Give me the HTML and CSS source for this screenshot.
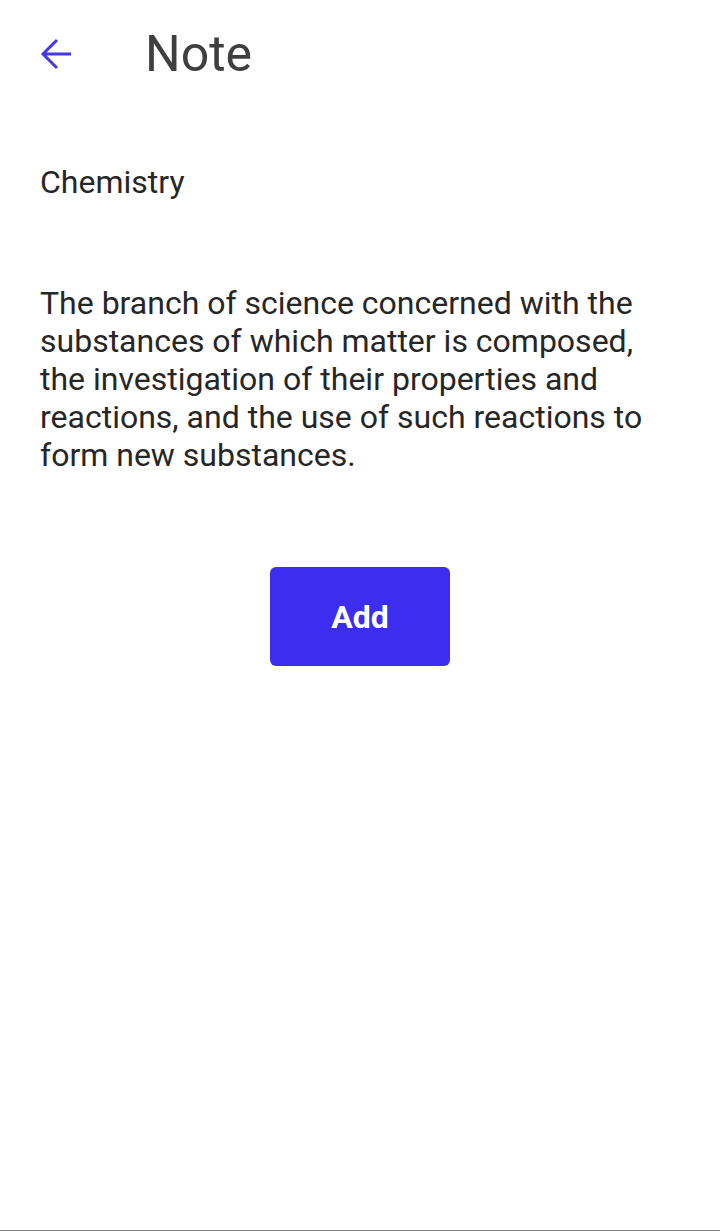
FILE: index.html
```html
<!DOCTYPE html>
<html>
<head>
<meta charset="utf-8">
<link rel="stylesheet" href="styles.css">
</head>
<body>
<div class="page">
  <header class="appbar">
    <button class="back" aria-label="Back">
      <svg viewBox="0 0 32 32" width="32" height="32"><path d="M31 16H3M17 2L3 16l14 14" fill="none" stroke="currentColor" stroke-width="3"/></svg>
    </button>
    <h1 class="title">Note</h1>
  </header>
  <main class="content">
    <p class="subject">Chemistry</p>
    <p class="body">The branch of science concerned with the substances of which matter is composed, the investigation of their properties and reactions, and the use of such reactions to form new substances.</p>
    <div class="actions">
      <button class="add">Add</button>
    </div>
  </main>
  <div class="bottom-line"></div>
</div>
</body>
</html>
```
FILE: styles.css
```css
* { box-sizing: border-box; }
html, body { margin: 0; padding: 0; background: #fff; }
body { font-family: Roboto, "Noto Sans", sans-serif; }
.page {
  width: 720px;
  height: 1231px;
  display: flex;
  flex-direction: column;
}
.appbar {
  display: flex;
  align-items: center;
  height: 108px;
  padding-left: 40px;
}
.back {
  border: 0;
  background: none;
  padding: 0;
  width: 32px;
  height: 32px;
  color: #4636e6;
  display: flex;
}
.title {
  margin: 0 0 0 73px;
  font-size: 50px;
  font-weight: 400;
  color: #3f3f3f;
}
.content {
  padding: 0 40px;
}
.subject {
  margin: 55px 0 0;
  font-size: 32px;
  line-height: 38px;
  color: #262626;
}
.body {
  margin: 83px 0 0;
  font-size: 32px;
  line-height: 38px;
  color: #262626;
}
.actions {
  display: flex;
  justify-content: center;
  margin-top: 93px;
}
.add {
  width: 180px;
  height: 99px;
  border: 0;
  border-radius: 6px;
  background: #3d2df0;
  color: #fff;
  font-family: Roboto, sans-serif;
  font-size: 32px;
  font-weight: 700;
}
.bottom-line {
  margin-top: auto;
  height: 1px;
  background: #808080;
}
```
